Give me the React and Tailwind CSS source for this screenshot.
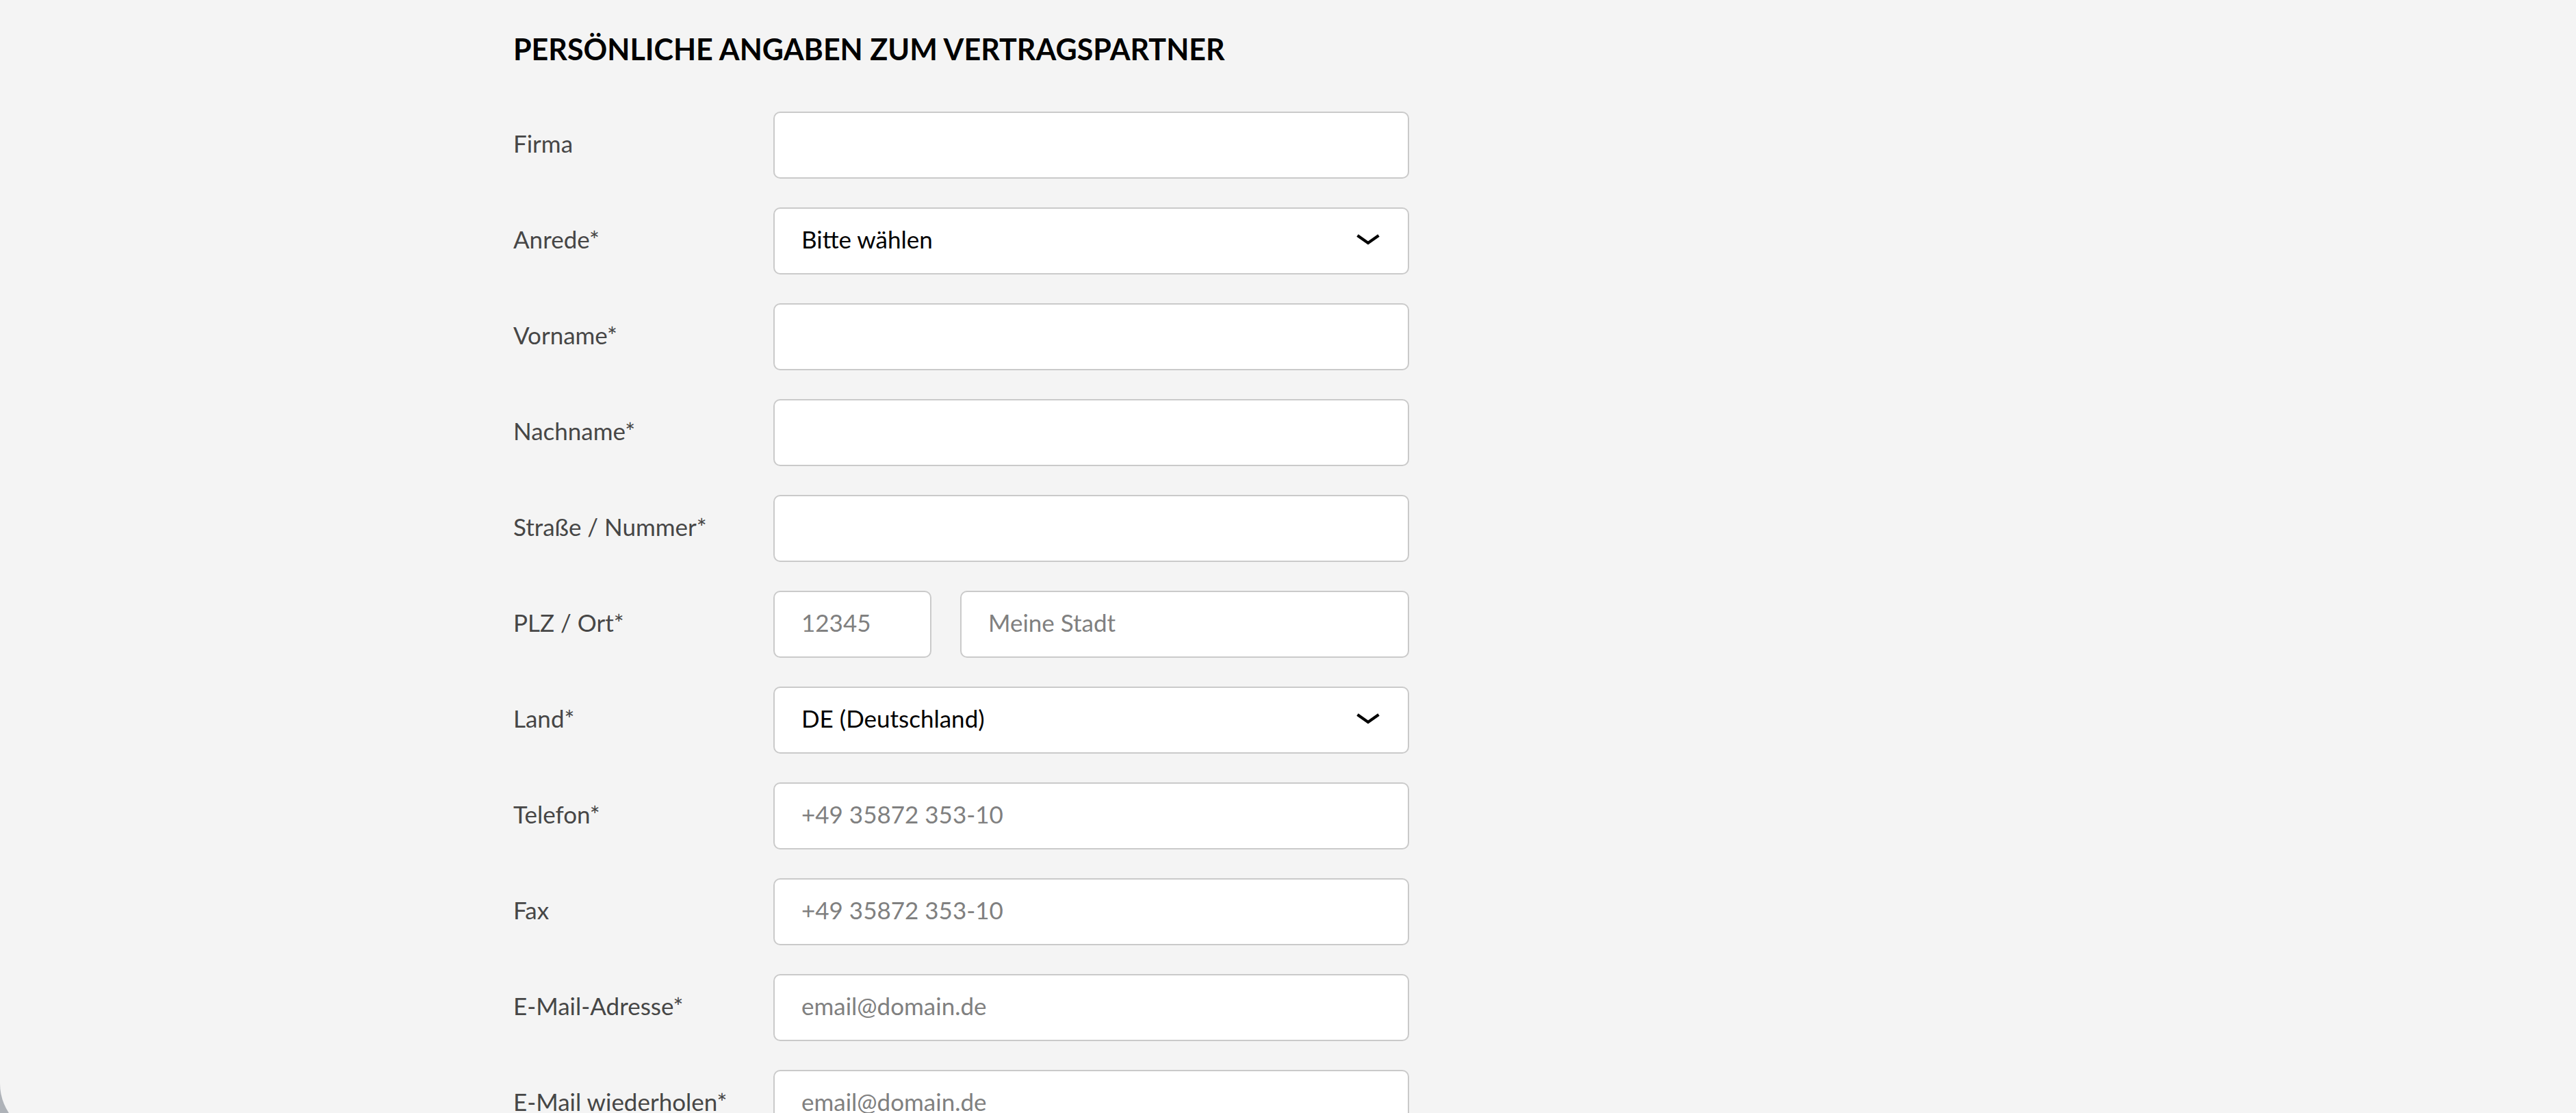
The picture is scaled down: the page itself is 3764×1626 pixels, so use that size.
import React from "react";

const Chevron = () => (
  <svg width="36" height="18" viewBox="0 0 36 18" className="shrink-0">
    <path d="M2.5 3 L18 14 L33.5 3" fill="none" stroke="#000" strokeWidth="4.2" strokeLinecap="butt" strokeLinejoin="miter" />
  </svg>
);

const boxBase =
  "h-[98px] rounded-[10px] border-2 border-[#cacaca] bg-white flex items-center px-[39px] pb-[5px] text-[35px]";

function TextBox({ placeholder, className = "" }) {
  return (
    <div className={`${boxBase} ${className}`}>
      <span className="text-[#808080]">{placeholder || "\u00a0"}</span>
    </div>
  );
}

function SelectBox({ value }) {
  return (
    <div className={`${boxBase} justify-between pr-[40px]`}>
      <span className="text-black">{value}</span>
      <Chevron />
    </div>
  );
}

function Row({ label, children }) {
  return (
    <div className="flex items-center">
      <div className="w-[380px] shrink-0 pb-[5px] text-[35px] text-[#464646]">{label}</div>
      <div className="w-[929px]">{children}</div>
    </div>
  );
}

export default function App() {
  return (
    <div className="h-[1626px] w-full overflow-hidden bg-[#aeb2b8]">
      <div className="h-[1661px] rounded-bl-[78px] bg-[#f4f4f4] pl-[750px] pt-[46px] font-['Lato',sans-serif]">
        <h2 className="text-[43px] leading-[52px] font-bold text-black">
          PERSÖNLICHE ANGABEN ZUM VERTRAGSPARTNER
        </h2>
        <div className="mt-[65px] flex flex-col gap-[42px]">
          <Row label="Firma">
            <TextBox />
          </Row>
          <Row label="Anrede*">
            <SelectBox value="Bitte wählen" />
          </Row>
          <Row label="Vorname*">
            <TextBox />
          </Row>
          <Row label="Nachname*">
            <TextBox />
          </Row>
          <Row label="Straße / Nummer*">
            <TextBox />
          </Row>
          <Row label="PLZ / Ort*">
            <div className="flex gap-[42px]">
              <TextBox placeholder="12345" className="w-[231px] shrink-0" />
              <TextBox placeholder="Meine Stadt" className="flex-1" />
            </div>
          </Row>
          <Row label="Land*">
            <SelectBox value="DE (Deutschland)" />
          </Row>
          <Row label="Telefon*">
            <TextBox placeholder="+49 35872 353-10" />
          </Row>
          <Row label="Fax">
            <TextBox placeholder="+49 35872 353-10" />
          </Row>
          <Row label="E-Mail-Adresse*">
            <TextBox placeholder="email@domain.de" />
          </Row>
          <Row label="E-Mail wiederholen*">
            <TextBox placeholder="email@domain.de" />
          </Row>
        </div>
      </div>
    </div>
  );
}
